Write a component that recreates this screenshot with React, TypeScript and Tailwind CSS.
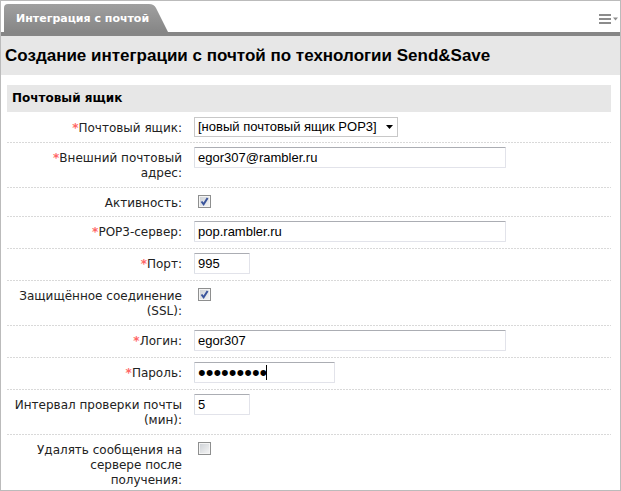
import type { ReactNode } from "react";

const inputClass =
  "h-[21px] rounded-[1px] border border-[#e2e3ea] border-t-[#abadb3] border-l-[#dbdfe6] bg-white px-[3px] text-[13px] text-black outline-none font-['Liberation_Sans',Arial,sans-serif]";

const rowHeights = {
  first: "min-h-[30px]",
  check: "min-h-[29px]",
  field: "min-h-[32px]",
  double: "min-h-[45px]",
  triple: "min-h-[55px]",
};

type RowProps = {
  id: string;
  label: string;
  size: keyof typeof rowHeights;
  required?: boolean;
  last?: boolean;
  children: ReactNode;
};

function Row({ id, label, size, required, last, children }: RowProps) {
  return (
    <div className={`relative flex items-start ${rowHeights[size]}`}>
      <label
        htmlFor={id}
        className="w-[175px] shrink-0 pt-2 text-right text-[12px] leading-[15px] whitespace-pre-line text-[#222]"
      >
        {required && <span className="font-bold text-[#f66]">*</span>}
        {label}
      </label>
      <div className="min-w-0 flex-1 pt-1 pl-3">{children}</div>
      {!last && <Dots />}
    </div>
  );
}

function Dots() {
  return (
    <div className="absolute inset-x-0 bottom-0 h-px bg-[repeating-linear-gradient(90deg,#d9d9d9_0_2px,#fff_2px_3px)]" />
  );
}

function Check({ id, checked }: { id: string; checked?: boolean }) {
  return (
    <div className="grid h-[19px] w-[20px] place-items-center">
      <input
        id={id}
        type="checkbox"
        defaultChecked={checked}
        className="peer col-start-1 row-start-1 h-[13px] w-[13px] appearance-none border border-[#8e8f8f] bg-linear-to-br from-[#ccd0d5] to-[#f6f6f6] shadow-[inset_0_0_0_1px_#f4f4f4]"
      />
      <svg
        viewBox="0 0 13 13"
        className="pointer-events-none invisible col-start-1 row-start-1 h-[13px] w-[13px] peer-checked:visible"
      >
        <path d="M3.5 6.5 L5.6 9.3 L9.6 3" fill="none" stroke="#3b559c" strokeWidth="2" />
      </svg>
    </div>
  );
}

export default function App() {
  return (
    <main className="border border-[#bbb] bg-white font-['DejaVu_Sans',Verdana,sans-serif] text-black">
      <header className="flex h-[35px] items-end justify-between border-b-4 border-[#868686] pl-[3px]">
        <button type="button" className="grid h-[28px] w-[165px] text-left">
          <svg
            viewBox="0 0 165 28"
            preserveAspectRatio="none"
            className="col-start-1 row-start-1 h-full w-full"
          >
            <defs>
              <linearGradient id="tab" x1="0" y1="0" x2="0" y2="1">
                <stop offset="0" stopColor="#a0a0a0" />
                <stop offset="1" stopColor="#868686" />
              </linearGradient>
            </defs>
            <path
              d="M0 28 V4 Q0 0 4 0 H145 Q150 0 152 4 L164 28 Z"
              fill="url(#tab)"
            />
          </svg>
          <span className="col-start-1 row-start-1 self-center pl-3 text-[11px] leading-[15px] font-bold whitespace-nowrap text-white">
            Интеграция с почтой
          </span>
        </button>
        <button type="button" aria-label="Меню" className="mb-[7px] mr-[2px] h-[12px] w-[19px]">
          <svg viewBox="0 0 19 12" className="h-[12px] w-[19px]">
            <path d="M0 1h12v2H0zM0 5h12v2H0zM0 9h12v2H0z" fill="#8c8c8c" />
            <path d="M14 4.5h5l-2.5 3z" fill="#8c8c8c" />
          </svg>
        </button>
      </header>

      <h1 className="h-[39px] bg-[#e7e7e7] pl-1 font-['Liberation_Sans',Arial,sans-serif] text-[17px] leading-[39px] font-bold whitespace-nowrap">
        Создание интеграции с почтой по технологии Send&amp;Save
      </h1>

      <form className="pt-[10px] pr-[9px] pl-[6px]">
        <h2 className="mb-px h-[27px] bg-[#e7e7e7] pl-[5px] text-[12px] leading-[27px] font-bold">
          Почтовый ящик
        </h2>

        <Row id="mailbox" label="Почтовый ящик:" size="first" required>
          <div className="grid w-[204px]">
            <select
              id="mailbox"
              className="col-start-1 row-start-1 h-[20px] appearance-none border border-[#c8c8c8] bg-white pl-[3px] text-[13px] leading-[18px] text-black font-['Liberation_Sans',Arial,sans-serif]"
            >
              <option>[новый почтовый ящик POP3]</option>
            </select>
            <svg
              viewBox="0 0 7 4"
              className="pointer-events-none col-start-1 row-start-1 mr-[5px] h-[4px] w-[7px] self-center justify-self-end"
            >
              <path d="M0 0h7L3.5 4z" fill="#000" />
            </svg>
          </div>
        </Row>
        <Row id="address" label={"Внешний почтовый\nадрес:"} size="double" required>
          <input id="address" type="text" defaultValue="egor307@rambler.ru" className={`${inputClass} block w-full max-w-[312px]`} />
        </Row>
        <Row id="active" label="Активность:" size="check">
          <Check id="active" checked />
        </Row>
        <Row id="server" label="POP3-сервер:" size="field" required>
          <input id="server" type="text" defaultValue="pop.rambler.ru" className={`${inputClass} block w-full max-w-[312px]`} />
        </Row>
        <Row id="port" label="Порт:" size="field" required>
          <input id="port" type="text" defaultValue="995" className={`${inputClass} block w-[56px]`} />
        </Row>
        <Row id="ssl" label={"Защищённое соединение\n(SSL):"} size="double">
          <Check id="ssl" checked />
        </Row>
        <Row id="login" label="Логин:" size="field" required>
          <input id="login" type="text" defaultValue="egor307" className={`${inputClass} block w-full max-w-[312px]`} />
        </Row>
        <Row id="password" label="Пароль:" size="field" required>
          <div className="relative w-[141px]">
            <input
              id="password"
              type="password"
              defaultValue="rambler30"
              className="block h-[21px] w-full rounded-[1px] border border-[#e2e3ea] border-t-[#abadb3] border-l-[#dbdfe6] bg-white px-[3px] font-['Liberation_Sans',Arial,sans-serif] text-[22px] leading-[19px] text-black outline-none"
            />
            <span className="absolute top-[3px] left-[72px] h-[15px] w-px bg-black" />
          </div>
        </Row>
        <Row id="interval" label={"Интервал проверки почты\n(мин):"} size="double">
          <input id="interval" type="text" defaultValue="5" className={`${inputClass} block w-[56px]`} />
        </Row>
        <Row id="remove" label={"Удалять сообщения на\nсервере после\nполучения:"} size="triple" last>
          <Check id="remove" />
        </Row>
      </form>
    </main>
  );
}
